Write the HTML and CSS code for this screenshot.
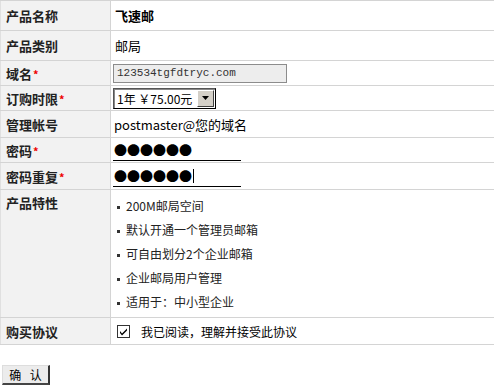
FILE: index.html
```html
<!DOCTYPE html>
<html>
<head>
<meta charset="utf-8">
<title>购买邮局</title>
<link rel="stylesheet" href="styles.css">
</head>
<body>
<table class="order">
	<tr class="r30">
		<th>产品名称</th>
		<td><b>飞速邮</b></td>
	</tr>
	<tr class="r30">
		<th>产品类别</th>
		<td>邮局</td>
	</tr>
	<tr>
		<th>域名<span class="req">*</span></th>
		<td><input class="domain" type="text" value="123534tgfdtryc.com" readonly></td>
	</tr>
	<tr>
		<th>订购时限<span class="req">*</span></th>
		<td>
			<span class="sel"><span class="sel-txt">1年 ￥75.00元</span><span class="sel-btn"><svg width="7" height="4" viewBox="0 0 7 4"><path d="M0 0h7L3.5 4z" fill="#000"/></svg></span></span>
		</td>
	</tr>
	<tr class="r27">
		<th>管理帐号</th>
		<td class="big">postmaster@您的域名</td>
	</tr>
	<tr>
		<th>密码<span class="req">*</span></th>
		<td><span class="pwd">●●●●●●</span></td>
	</tr>
	<tr class="r27">
		<th>密码重复<span class="req">*</span></th>
		<td><span class="pwd">●●●●●●<i class="caret"></i></span></td>
	</tr>
	<tr>
		<th class="top">产品特性</th>
		<td>
			<ul class="feat">
				<li>200M邮局空间</li>
				<li>默认开通一个管理员邮箱</li>
				<li>可自由划分2个企业邮箱</li>
				<li>企业邮局用户管理</li>
				<li>适用于：中小型企业</li>
			</ul>
		</td>
	</tr>
	<tr class="r27">
		<th>购买协议</th>
		<td><label class="agree"><span class="chk"><svg width="9" height="9" viewBox="0 0 9 9"><path d="M1 4l2 2.5L8 1.5v2L3 8.5 1 6z" fill="#000"/></svg></span>我已阅读，理解并接受此协议</label></td>
	</tr>
</table>

<div class="act"><button class="btn" type="button">确 认</button></div>
</body>
</html>
```
FILE: styles.css
```css
*{margin:0; padding:0}
body{font-family:"Noto Sans CJK SC", "Liberation Sans", sans-serif; font-size:12px; color:#000; background:#fff;}

.order{width:100%; border-collapse:collapse;}
.order th, .order td{border:1px solid #d4d4d4; height:24px; vertical-align:middle; text-align:left;}
.order th{width:104px; padding-left:5px; background:#f2f2f2; color:#222; font-weight:bold; font-size:13px;}
.order td{padding-left:2px; border-right:none;}
.order th{border-left:1px solid #e0e0e0;}
.order .r30 th, .order .r30 td{height:29px;}
.order .r30 td{padding-left:4px; font-size:13px;}
.order .r27 th, .order .r27 td{height:26px;}
.order th.top{vertical-align:top; padding-top:3px;}
.order td.big{padding-left:3px; font-size:13px;}

.req{color:#e00; font-size:11px; margin-left:1px;}

.domain{display:block; width:169px; height:17px; border:1px solid #8c8c8c; background:#ededed; font-family:"Liberation Mono", monospace; font-size:11px; padding-left:3px; color:#333; outline:none;}

.sel{display:inline-flex; align-items:center; height:19px; border:1px solid #000; border-top-color:#555; border-left-color:#555; box-shadow:inset 1px 1px 0 #888;}
.sel-txt{padding:0 5px 0 3px; font-size:12px;}
.sel-btn{display:flex; align-items:center; justify-content:center; width:15px; height:15px; margin-right:1px; background:#d4d0c8; border:1px solid #fff; border-right-color:#404040; border-bottom-color:#404040;}

.pwd{display:inline-block; width:127px; height:21px; border-bottom:1px solid #000; font-size:13px; line-height:21px; padding-left:1px;}
.caret{display:inline-block; width:1px; height:14px; background:#000; vertical-align:-2px; margin-left:1px;}

.feat{list-style:none; padding:6px 0 1px 4px;}
.feat li{height:24px; line-height:20px; font-size:12px; color:#222;}
.feat li:before{content:""; display:inline-block; width:3px; height:3px; background:#333; margin-right:6px; vertical-align:middle;}

.agree{display:flex; align-items:center; padding-left:4px; font-size:12px;}
.chk{display:flex; align-items:center; justify-content:center; width:11px; height:11px; border:1px solid #333; background:#fff; margin-right:11px;}

.act{padding:20px 0 0 2px;}
.btn{display:block; width:48px; height:20px; background:#ececec; border:1px solid #ddd; border-right:2px solid #333; border-bottom:2px solid #444; font-family:"Noto Sans CJK SC", sans-serif; font-size:12px; line-height:16px; color:#000; letter-spacing:3px; text-indent:3px;}
```
